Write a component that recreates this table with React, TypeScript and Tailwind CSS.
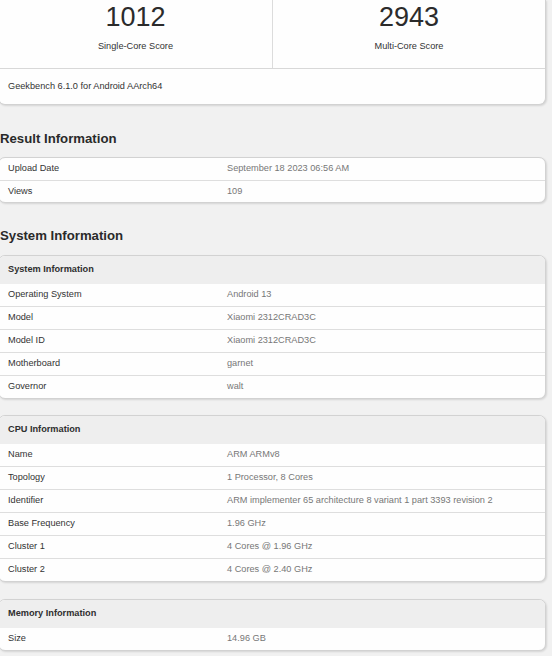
import React from "react";

type Row = [string, string];

function Card({ title, rows, tight }: { title?: string; rows: Row[]; tight?: boolean }) {
  return (
    <div className="bg-[#fefefe] border border-[#d2d2d2] rounded-[7px] overflow-hidden shadow-[1px_1px_2px_rgba(0,0,0,0.12)]">
      {title && (
        <div className="h-[28px] bg-[#eeeeee] flex items-center pl-[9px] font-bold text-[#2f2f2f]">
          {title}
        </div>
      )}
      {rows.map(([k, v], i) => (
        <div
          key={k}
          className={`flex items-center ${
            i > 0 ? (tight ? "h-[22px] border-t border-[#dedede]" : "h-[23px] border-t border-[#dedede]") : "h-[22px]"
          }`}
        >
          <div className="w-[228px] pl-[9px] text-[#333]">{k}</div>
          <div className="text-[#777]">{v}</div>
        </div>
      ))}
    </div>
  );
}

function Heading({ children, second }: { children: React.ReactNode; second?: boolean }) {
  return (
    <div
      className={`${second ? "mt-[23px] mb-[9px]" : "mt-[24px] mb-[8px]"} h-[20px] leading-[20px] text-[13.2px] font-bold text-[#2a2a2a] pl-[2px]`}
    >
      {children}
    </div>
  );
}

export default function App() {
  return (
    <div
      className="min-h-[656px] bg-[#f1f1f1] overflow-hidden text-[9.2px]"
      style={{ fontFamily: '"Liberation Sans", Arial, sans-serif' }}
    >
      <div className="w-[548px] -ml-[2px]">
        <div className="bg-[#fefefe] border border-t-0 border-[#d2d2d2] rounded-b-[7px] shadow-[1px_1px_2px_rgba(0,0,0,0.12)]">
          <div className="flex h-[69px] border-b border-[#d8d8d8]">
            <div className="w-[274px] border-r border-[#dcdcdc] flex flex-col items-center pt-[3px]">
              <div className="text-[27px] leading-[28px] text-[#2b2b2b]">1012</div>
              <div className="mt-[9px] leading-[12px] text-[#333]">Single-Core Score</div>
            </div>
            <div className="flex-1 flex flex-col items-center pt-[3px]">
              <div className="text-[27px] leading-[28px] text-[#2b2b2b]">2943</div>
              <div className="mt-[9px] leading-[12px] text-[#333]">Multi-Core Score</div>
            </div>
          </div>
          <div className="h-[35px] flex items-center pl-[9px] text-[#333]">
            Geekbench 6.1.0 for Android AArch64
          </div>
        </div>

        <Heading>Result Information</Heading>
        <Card
          tight
          rows={[
            ["Upload Date", "September 18 2023 06:56 AM"],
            ["Views", "109"],
          ]}
        />

        <Heading second>System Information</Heading>
        <Card
          title="System Information"
          rows={[
            ["Operating System", "Android 13"],
            ["Model", "Xiaomi 2312CRAD3C"],
            ["Model ID", "Xiaomi 2312CRAD3C"],
            ["Motherboard", "garnet"],
            ["Governor", "walt"],
          ]}
        />

        <div className="mt-[16px]">
          <Card
            title="CPU Information"
            rows={[
              ["Name", "ARM ARMv8"],
              ["Topology", "1 Processor, 8 Cores"],
              ["Identifier", "ARM implementer 65 architecture 8 variant 1 part 3393 revision 2"],
              ["Base Frequency", "1.96 GHz"],
              ["Cluster 1", "4 Cores @ 1.96 GHz"],
              ["Cluster 2", "4 Cores @ 2.40 GHz"],
            ]}
          />
        </div>

        <div className="mt-[17px]">
          <Card title="Memory Information" rows={[["Size", "14.96 GB"]]} />
        </div>
      </div>
    </div>
  );
}
